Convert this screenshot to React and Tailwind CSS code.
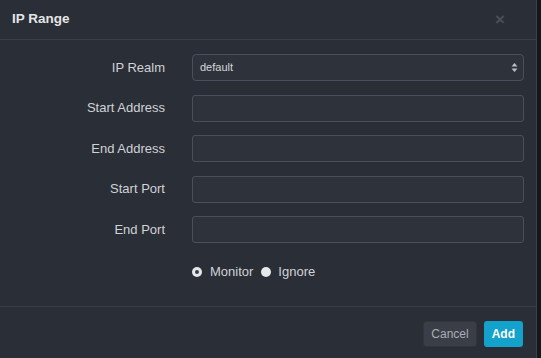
import { useState } from "react";

const FIELDS = [
  { label: "Start Address" },
  { label: "End Address" },
  { label: "Start Port" },
  { label: "End Port" },
];

function Row({ label, children }) {
  return (
    <div className="flex items-center h-[27px]">
      <label className="w-[165px] text-right pr-0 text-[13px] text-[#d0d2d6]">{label}</label>
      <div className="ml-[27px] w-[332px]">{children}</div>
    </div>
  );
}

export default function App() {
  const [mode, setMode] = useState("monitor");
  return (
    <div className="w-[541px] h-[358px] bg-[#15171b] flex font-['Liberation_Sans',Arial,sans-serif]">
      <div className="w-[537px] h-full bg-[#2a2e36] border-r border-[#3a3f49] flex flex-col">
        <div className="h-[40px] flex items-center justify-between pl-[12px] pr-[31px] border-b border-[#3a3e48]">
          <h3 className="text-[13.5px] font-bold text-[#e4e5e8]">IP Range</h3>
          <span className="text-[17px] font-bold text-[#4a4f59] leading-none">×</span>
        </div>
        <div className="flex-1 flex flex-col gap-[13.5px] pt-[14px]">
          <Row label="IP Realm">
            <div className="h-[27px] rounded-[4px] border border-[#4a505b] bg-[#2e333b] flex items-center justify-between pl-[7px] pr-[5px]">
              <span className="text-[11px] text-[#d6d8dc]">default</span>
              <svg width="7" height="11" viewBox="0 0 7 11">
                <path d="M3.5 1 L6.5 4.5 H0.5 Z" fill="#b8bcc4" />
                <path d="M3.5 10 L6.5 6.5 H0.5 Z" fill="#b8bcc4" />
              </svg>
            </div>
          </Row>
          {FIELDS.map((f) => (
            <Row key={f.label} label={f.label}>
              <input className="block w-full h-[27px] rounded-[3px] border border-[#4a505b] bg-[#2e333b] outline-none px-2 text-[12px] text-white" />
            </Row>
          ))}
          <div className="flex items-center h-[28px] mt-[1px] pl-[192px] text-[13px] text-[#d0d2d6]">
            <button onClick={() => setMode("monitor")} className="flex items-center">
              <span className="w-[10px] h-[10px] rounded-full bg-[#e6e7e9] flex items-center justify-center">
                {mode === "monitor" && <span className="w-[4px] h-[4px] rounded-full bg-[#3a3e46]" />}
              </span>
              <span className="ml-[8px]">Monitor</span>
            </button>
            <button onClick={() => setMode("ignore")} className="flex items-center ml-[8px]">
              <span className="w-[10px] h-[10px] rounded-full bg-[#e6e7e9] flex items-center justify-center">
                {mode === "ignore" && <span className="w-[4px] h-[4px] rounded-full bg-[#3a3e46]" />}
              </span>
              <span className="ml-[7px]">Ignore</span>
            </button>
          </div>
        </div>
        <div className="h-[52px] border-t border-[#3a3e48] flex items-center justify-end gap-[7px] pr-[13px] pt-[2px]">
          <button className="h-[26px] px-[7px] rounded-[3px] bg-[#3a3f47] border border-[#30343b] text-[12px] text-[#a9adb4]">Cancel</button>
          <button className="h-[26px] px-[8px] rounded-[3px] bg-[#12a2cc] text-[12px] font-bold text-white">Add</button>
        </div>
      </div>
    </div>
  );
}
